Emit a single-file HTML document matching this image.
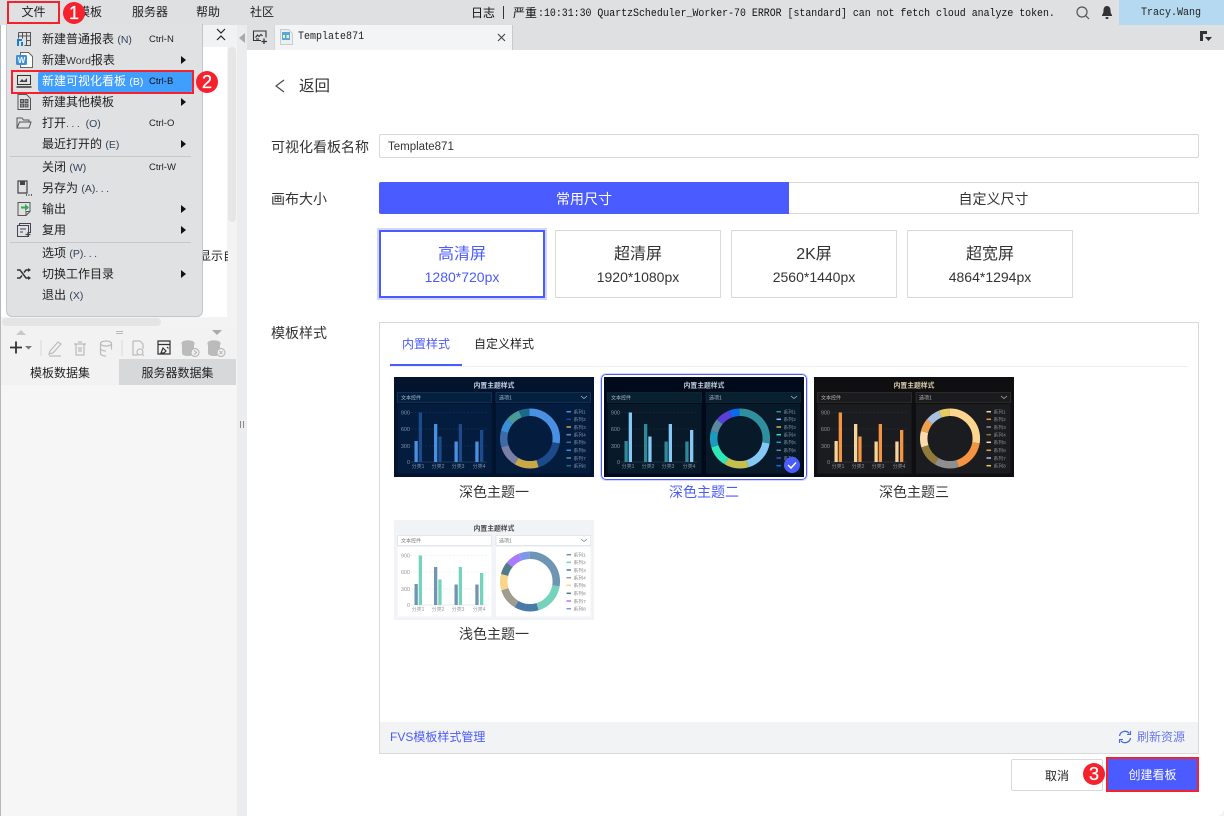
<!DOCTYPE html>
<html lang="zh"><head><meta charset="utf-8"><title>Template871</title>
<style>
*{box-sizing:border-box;margin:0;padding:0}
html,body{width:1224px;height:816px;overflow:hidden;background:#f1f2f4}
body{position:relative;font-family:"Liberation Sans","Noto Sans CJK SC",sans-serif;color:#333}
.a{position:absolute;white-space:nowrap}
.t{position:absolute;white-space:nowrap;line-height:16px;transform:translateY(-8px)}
.m{font-family:"Liberation Mono","Noto Sans CJK SC",monospace}
.mi{position:absolute;left:42px;font-size:12px;line-height:16px;white-space:nowrap;color:#222;transform:translateY(-8px)}
.mi small{font-family:"Liberation Sans",sans-serif;font-size:10.5px;color:#345}
.sc{position:absolute;left:149px;font-size:9.5px;line-height:12px;color:#222;transform:translateY(-5px)}
.ar{position:absolute;left:181px;width:0;height:0;border-left:5px solid #111;border-top:4px solid transparent;border-bottom:4px solid transparent;transform:translateY(-4px)}
.ic{position:absolute;left:16px;transform:translateY(-8px)}
.bd{position:absolute;width:22px;height:22px;border-radius:50%;background:#f5222d;color:#fff;font-size:18px;line-height:22px;text-align:center;-webkit-text-stroke:.3px #fff}
.card{position:absolute;top:230px;width:166px;height:68px;border:1px solid #d9d9d9;background:#fff;text-align:center;color:#333}
.card b{position:absolute;left:0;right:0;top:15px;font-weight:400;font-size:16px;line-height:18px}
.card i{position:absolute;left:0;right:0;top:38px;font-style:normal;font-size:14px;line-height:16px}
.card.on{border:2px solid #4a5bff;outline:2px solid #d3d7ff;color:#4a5bff}
.card.on b{top:14px}.card.on i{top:37px}
svg.th{position:absolute;width:200px;height:100px;display:block}
svg.th text{font-family:"Liberation Sans","Noto Sans CJK SC",sans-serif}
.ttl{font-size:6.8px;font-weight:700}
.ctl{font-size:5px}
.yl{font-size:5.5px;text-anchor:end}
.xl{font-size:5px;text-anchor:middle}
.lg{font-size:4.8px}
.cap{position:absolute;width:200px;text-align:center;font-size:14px;line-height:16px;color:#333}
</style></head><body>

<!-- top bar -->
<div class="a" style="left:0;top:0;width:1224px;height:25px;background:#dfe0e2"></div>
<div class="t" style="left:78px;top:12px;font-size:12px;color:#222">模板</div>
<div class="t" style="left:132px;top:12px;font-size:12px;color:#222">服务器</div>
<div class="t" style="left:196px;top:12px;font-size:12px;color:#222">帮助</div>
<div class="t" style="left:250px;top:12px;font-size:12px;color:#222">社区</div>
<div class="t" style="left:471px;top:13px;font-size:12px;color:#111">日志</div>
<div class="a" style="left:503px;top:6px;width:1px;height:13px;background:#333"></div>
<div class="t" style="left:513px;top:13px;font-size:12px;color:#111">严重</div>
<div class="t m" style="left:538px;top:14px;font-size:11px;color:#111;transform-origin:left center;transform:translateY(-8px) scaleX(.9)">:10:31:30 QuartzScheduler_Worker-70 ERROR [standard] can not fetch cloud analyze token.</div>
<svg class="a" style="left:1075px;top:5px" width="16" height="16" viewBox="0 0 16 16" fill="none" stroke="#555" stroke-width="1.2"><circle cx="7" cy="7" r="5"/><path d="M10.7 10.7L14 14"/></svg>
<svg class="a" style="left:1101px;top:5px" width="12" height="15" viewBox="0 0 12 15"><path d="M6 1c-2.400 0-3.500 2-3.500 4.500 0 2.500-.8 3.500-1.500 4.500v1h10v-1c-.7-1-1.500-2-1.500-4.500C9.500 3 8.400 1 6 1z" fill="#333"/><rect x="4.500" y="12" width="3" height="2" rx="1" fill="#333"/></svg>
<div class="a m" style="left:1119px;top:0;width:105px;height:25px;background:#b5d9f0;font-size:11px;line-height:27px;text-align:center;color:#222"><span style="display:inline-block;transform:scaleX(.91)">Tracy.Wang</span></div>

<!-- tab strip -->
<div class="a" style="left:237px;top:25px;width:987px;height:25px;background:#dfe0e2"></div>
<div class="a" style="left:237px;top:25px;width:10px;height:791px;background:#ebecee"></div>
<div class="a" style="left:239px;top:33px;width:0;height:0;border-right:6px solid #aaa;border-top:5px solid transparent;border-bottom:5px solid transparent"></div>
<svg class="a" style="left:252px;top:29px" width="16" height="16" viewBox="0 0 16 16" fill="none" stroke="#333" stroke-width="1.1"><path d="M9 11.500H1.500V2h12.500v6.500"/><path d="M3.500 8.500l2-2.500 1.500 1.500 2-2 1.500 1.500"/><path d="M4 10h3" /><path d="M12 9.500v5.500M9.500 12.500h5.500" stroke-width="1.3"/></svg>
<div class="a" style="left:274px;top:25px;width:239px;height:25px;background:#f3f4f6;border-right:1px solid #c9cacc;border-left:1px solid #d5d6d8"></div>
<svg class="a" style="left:280px;top:29px" width="13" height="16" viewBox="0 0 13 16"><path d="M.5.500h8l4 4v11H.5z" fill="#eee" stroke="#ccc"/><rect x="2" y="3" width="8" height="8" fill="#5aa7dc"/><rect x="3" y="6" width="6" height="3" fill="#dff0e4"/><rect x="5" y="6" width="1.500" height="3" fill="#58b368"/></svg>
<div class="t m" style="left:298px;top:37px;font-size:11px;color:#222;transform-origin:left center;transform:translateY(-8px) scaleX(.91)">Template871</div>
<svg class="a" style="left:497px;top:33px" width="9" height="9" viewBox="0 0 9 9" stroke="#444" stroke-width="1.100"><path d="M1 1l7 7M8 1L1 8"/></svg>
<svg class="a" style="left:1199px;top:30px" width="14" height="13" viewBox="0 0 14 13"><path d="M1 1h7v3H4v7H1z" fill="#333"/><path d="M6 7h7l-3.500 4z" fill="#333"/></svg>

<!-- left panel -->
<div class="a" style="left:0;top:25px;width:237px;height:791px;background:#f6f6f7;border-left:1px solid #b4b9be"></div>
<div class="a" style="left:1px;top:25px;width:236px;height:302px;background:#fff"></div>
<div class="a" style="left:203px;top:25px;width:34px;height:22px;background:#f1f2f3"></div>
<svg class="a" style="left:215px;top:28px" width="12" height="13" viewBox="0 0 12 13" fill="none" stroke="#222" stroke-width="1.200"><path d="M2 1l4 4 4-4M2 12l4-4 4 4"/></svg>
<div class="a" style="left:227px;top:47px;width:10px;height:271px;background:#f3f3f3"></div>
<div class="a" style="left:228px;top:47px;width:8px;height:175px;background:#e6e6e6;border-radius:4px"></div>
<div class="a" style="left:1px;top:317px;width:236px;height:10px;background:#f3f3f3"></div>
<div class="a" style="left:2px;top:318px;width:159px;height:8px;background:#e4e4e4;border-radius:4px"></div>
<div class="t" style="left:203px;top:256px;width:24.5px;overflow:hidden;font-size:12px;color:#222"><span style="margin-left:-4px">显示自</span></div>
<div class="a" style="left:1px;top:327px;width:236px;height:32px;background:#f2f2f3"></div>
<div class="a" style="left:16px;top:330px;border-left:5px solid transparent;border-right:5px solid transparent;border-bottom:5px solid #c8c8c8"></div>
<div class="a" style="left:212px;top:330px;border-left:5px solid transparent;border-right:5px solid transparent;border-top:5px solid #aaa"></div>
<div class="a" style="left:116px;top:331px;width:7px;height:3px;border-top:1px solid #bbb;border-bottom:1px solid #bbb"></div>
<svg class="a" style="left:8px;top:337px" width="228" height="22" viewBox="0 0 228 22" fill="none" stroke="#bbb" stroke-width="1.200">
<path d="M2 10.500h12M8 4.500v12" stroke="#333" stroke-width="1.800"/><path d="M17 9h7l-3.500 3.500z" fill="#777" stroke="none"/>
<path d="M33 3v16M114 3v16" stroke="#ddd"/>
<path d="M42 14l8-9 3 2-8 9-4 1zM41 19h12" stroke="#bbb"/>
<path d="M66 7h12M68 7v11h8V7M70 5h4M71 10v5M73 10v5"/>
<ellipse cx="98" cy="6.500" rx="5.500" ry="2.500"/><path d="M92.500 6.500v10c0 1.500 2.500 2.500 5.500 2.500M103.500 6.500v6M92.500 11.500c0 1.500 3 2.500 5.500 2.500"/>
<path d="M125 4h7l3 3v5M125 4v14h5"/><circle cx="132" cy="15" r="3"/><path d="M134 17l2 2"/>
<path d="M150 4h12v13h-12zM150 7.500h12" stroke="#333"/><path d="M155 11l3 3-2 2h-3zM159 10l1.500 1.500" stroke="#333"/>
<ellipse cx="180" cy="6.500" rx="6" ry="2.700" fill="#bbb"/><path d="M174 6.500v10c0 1.500 3 2.500 6 2.500s6-1 6-2.500V6.500z" fill="#bbb" stroke="none"/><circle cx="187" cy="15.500" r="4" fill="#f2f2f3"/><path d="M186 13.500l2.500 2-2.500 2"/>
<ellipse cx="206" cy="6.500" rx="6" ry="2.700" fill="#bbb"/><path d="M200 6.500v10c0 1.500 3 2.500 6 2.500s6-1 6-2.500V6.500z" fill="#bbb" stroke="none"/><circle cx="213" cy="15.500" r="4" fill="#f2f2f3"/><path d="M211.500 14l3 3M214.500 14l-3 3"/>
</svg>
<div class="a" style="left:1px;top:359px;width:118px;height:26px;background:#f2f2f3;font-size:12px;line-height:28px;text-align:center;color:#222">模板数据集</div>
<div class="a" style="left:119px;top:359px;width:117px;height:26px;background:#d7d8da;font-size:12px;line-height:28px;text-align:center;color:#222">服务器数据集</div>
<div class="a" style="left:240px;top:421px;width:4px;height:7px;border-left:1px solid #888;border-right:1px solid #888"></div>

<!-- file menu -->
<div class="a" style="left:6px;top:24px;width:197px;height:293px;background:#e0e1e3;border:1px solid #c4c5c7;border-top:0;border-radius:0 0 6px 6px"></div>
<div class="a" style="left:7px;top:1px;width:53px;height:23px;border:2px solid #f5222d;font-size:12px;line-height:19px;text-align:center;color:#222">文件</div>
<div class="a" style="left:38px;top:71px;width:155px;height:21px;background:#409eff;border-radius:3px"></div>
<div class="a" style="left:11px;top:70px;width:183px;height:24px;border:2px solid #f5222d"></div>
<div class="a" style="left:10px;top:156px;width:181px;height:1px;background:#c6c7c9"></div>
<div class="a" style="left:10px;top:242px;width:181px;height:1px;background:#c6c7c9"></div>

<svg class="ic" style="top:39px" width="16" height="16" viewBox="0 0 16 16" fill="none" stroke="#555"><path d="M2.500 1.500h12v13h-6M2.500 1.500v6M6.500 1.500v6M10.500 1.500v13M2.500 5h12M10.500 9.500h4"/><path d="M1 8h5v2H3v5H1zM5 11h2v4H5z" fill="#1e7fc8" stroke="none"/></svg>
<div class="mi" style="top:39px">新建普通报表 <small>(N)</small></div><div class="sc" style="top:39px">Ctrl-N</div>

<svg class="ic" style="top:60px" width="17" height="16" viewBox="0 0 17 16"><path d="M4.500.5h8l4 4v11h-12z" fill="#fff" stroke="#666"/><rect y="3" width="11" height="10" rx="1.500" fill="#3d8fd8"/><text x="5.500" y="11" font-size="8" font-weight="700" fill="#fff" text-anchor="middle" font-family="Liberation Sans">W</text></svg>
<div class="mi" style="top:60px">新建<small style="color:#333">Word</small>报表</div><div class="ar" style="top:60px"></div>

<svg class="ic" style="top:81px" width="16" height="16" viewBox="0 0 16 16" fill="none" stroke="#333"><path d="M1.500 2.500h13v9h-13z"/><path d="M3.500 9l2.500-3 2 2 3-3v4z" fill="#444" stroke="none"/><path d="M.5 14h15" stroke-width="1.500"/></svg>
<div class="mi" style="top:81px;color:#fff">新建可视化看板 <small style="color:#fff">(B)</small></div><div class="sc" style="top:81px;color:#111">Ctrl-B</div>

<svg class="ic" style="top:102px" width="16" height="16" viewBox="0 0 16 16" fill="none" stroke="#555"><path d="M2 .5h8.500l4 4v11H2z"/><path d="M4.500 5.500h3v3h-3zM9 5.500h3v3H9zM4.500 10h3v3h-3zM9 10h3v3H9z" fill="#999"/></svg>
<div class="mi" style="top:102px">新建其他模板</div><div class="ar" style="top:102px"></div>

<svg class="ic" style="top:123px" width="16" height="16" viewBox="0 0 16 16" fill="none" stroke="#555"><path d="M1 13V3h5l1.500 2H13v2M1 13l2.500-6H15l-2 6z"/></svg>
<div class="mi" style="top:123px">打开<small style="letter-spacing:2.500px">...</small> <small>(O)</small></div><div class="sc" style="top:123px">Ctrl-O</div>

<div class="mi" style="top:144px">最近打开的 <small>(E)</small></div><div class="ar" style="top:144px"></div>
<div class="mi" style="top:167px">关闭 <small>(W)</small></div><div class="sc" style="top:167px">Ctrl-W</div>

<svg class="ic" style="top:188px" width="16" height="16" viewBox="0 0 16 16"><path d="M2 1h9v12H2z" fill="none" stroke="#444" stroke-width="1.200"/><rect x="4" y="1" width="5" height="4" fill="#444"/><path d="M10 15h1M12.500 15h1M15 15h1" stroke="#333" stroke-width="1.500"/></svg>
<div class="mi" style="top:188px">另存为 <small>(A)</small><small style="letter-spacing:2.500px">...</small></div>

<svg class="ic" style="top:209px" width="16" height="16" viewBox="0 0 16 16" fill="none" stroke="#555"><path d="M2 1.500h12v9l-4 4H2z"/><path d="M10 14.500v-4h4"/><path d="M5 5.500h4V3l4 3.500L9 10V7.500H5z" fill="#34a853" stroke="none"/></svg>
<div class="mi" style="top:209px">输出</div><div class="ar" style="top:209px"></div>

<svg class="ic" style="top:230px" width="16" height="16" viewBox="0 0 16 16" fill="none" stroke="#445"><path d="M3.500 3.500V1.500h11v9h-2"/><path d="M1.500 3.500h11v11h-11z"/><path d="M4 7h6M4 10h3" /><path d="M12 10v5M9.500 12.500h5" stroke-width="1.200"/></svg>
<div class="mi" style="top:230px">复用</div><div class="ar" style="top:230px"></div>

<div class="mi" style="top:253px">选项 <small>(P)</small><small style="letter-spacing:2.500px">...</small></div>
<svg class="ic" style="top:274px" width="16" height="16" viewBox="0 0 16 16" fill="none" stroke="#333" stroke-width="1.500"><path d="M1 4h3l6 8h3M1 12h3l2-2.500M8 6.500L10 4h3"/><path d="M12 2l3 2-3 2zM12 10l3 2-3 2z" fill="#333" stroke="none"/></svg>
<div class="mi" style="top:274px">切换工作目录</div><div class="ar" style="top:274px"></div>
<div class="mi" style="top:295px">退出 <small>(X)</small></div>

<div class="bd" style="left:63px;top:2px">1</div>
<div class="bd" style="left:196px;top:71px">2</div>

<!-- main -->
<div class="a" style="left:247px;top:50px;width:977px;height:766px;background:#fff;border-radius:0 0 8px 0"></div>
<svg class="a" style="left:274px;top:79px" width="12" height="14" viewBox="0 0 12 14" fill="none" stroke="#444" stroke-width="1.100"><path d="M10 1L2 7l8 6"/></svg>
<div class="t" style="left:299px;top:87px;font-size:15.500px;color:#333">返回</div>

<div class="t" style="left:271px;top:147px;font-size:14px">可视化看板名称</div>
<div class="a" style="left:379px;top:134px;width:820px;height:24px;border:1px solid #d9d9d9;border-radius:2px;font-size:11.500px;line-height:24px;padding-left:8px;color:#333">Template871</div>

<div class="t" style="left:271px;top:199px;font-size:14px">画布大小</div>
<div class="a" style="left:379px;top:182px;width:410px;height:32px;background:#4a5bff;border-radius:2px 0 0 2px;color:#fff;font-size:14px;line-height:34px;text-align:center">常用尺寸</div>
<div class="a" style="left:789px;top:182px;width:410px;height:32px;border:1px solid #d9d9d9;border-left:0;font-size:14px;line-height:32px;text-align:center;color:#333">自定义尺寸</div>

<div class="card on" style="left:379px"><b>高清屏</b><i>1280*720px</i></div>
<div class="card" style="left:555px"><b>超清屏</b><i>1920*1080px</i></div>
<div class="card" style="left:731px"><b>2K屏</b><i>2560*1440px</i></div>
<div class="card" style="left:907px"><b>超宽屏</b><i>4864*1294px</i></div>

<div class="t" style="left:271px;top:333px;font-size:14px">模板样式</div>
<div class="a" style="left:379px;top:322px;width:820px;height:432px;border:1px solid #d9d9d9"></div>
<div class="t" style="left:402px;top:344px;font-size:12px;color:#4a5bff">内置样式</div>
<div class="t" style="left:474px;top:344px;font-size:12px;color:#222">自定义样式</div>
<div class="a" style="left:390px;top:366px;width:798px;height:1px;background:#eee"></div>
<div class="a" style="left:390px;top:364px;width:72px;height:2px;background:#4a5bff"></div>

<!-- theme 1 -->
<svg class="th" style="left:394px;top:377px" viewBox="0 0 200 100">
<rect width="200" height="100" fill="#02132e"/>
<text class="ttl" x="100" y="10.500" fill="#c5d3e3" text-anchor="middle">内置主题样式</text>
<rect x="3.500" y="15.500" width="94" height="10" fill="#04203f" stroke="#1d4168" stroke-width=".6"/><rect x="102" y="15.500" width="94.500" height="10" fill="#04203f" stroke="#1d4168" stroke-width=".6"/>
<text class="ctl" x="7" y="22.500" fill="#a9bacd">文本控件</text><text class="ctl" x="105" y="22.500" fill="#a9bacd">选项1</text><path d="M187 19l3 2.500 3-2.500" stroke="#a9bacd" stroke-width=".7" fill="none"/>
<rect x="3.500" y="27" width="94" height="69.500" fill="#041d3e"/><rect x="102" y="27" width="94.500" height="69.500" fill="#041d3e"/>
<path d="M17 35.500h76M17 52h76M17 69h76" stroke="#1d3d63" stroke-width=".6" stroke-dasharray="2 1.500"/><path d="M17 85h76" stroke="#31506f" stroke-width=".6"/>
<g fill="#7f93ab"><text class="yl" x="16" y="37.500">900</text><text class="yl" x="16" y="54">600</text><text class="yl" x="16" y="71">300</text><text class="yl" x="16" y="87">0</text></g>
<g fill="#4a90e2"><rect x="20.500" y="64" width="3.300" height="21"/><rect x="40" y="47" width="3.300" height="38"/><rect x="60.500" y="64.500" width="3.300" height="20.500"/><rect x="81.300" y="64.500" width="3.300" height="20.500"/></g>
<g fill="#1c4a8a"><rect x="24.700" y="35.500" width="3.300" height="49.500"/><rect x="44.300" y="59.500" width="3.300" height="25.500"/><rect x="64.700" y="47" width="3.300" height="38"/><rect x="86" y="53" width="3.300" height="32"/></g>
<g fill="#7f93ab"><text class="xl" x="24" y="91">分类1</text><text class="xl" x="44" y="91">分类2</text><text class="xl" x="64" y="91">分类3</text><text class="xl" x="85" y="91">分类4</text></g>
<g fill="none" stroke-width="7.500" transform="rotate(-90 136 61.500)"><circle cx="136" cy="61.500" r="26.300" stroke="#4a90e2" pathLength="360" stroke-dasharray="100 260"/><circle cx="136" cy="61.500" r="26.300" stroke="#1c4a8a" pathLength="360" stroke-dasharray="64 296" stroke-dashoffset="-100"/><circle cx="136" cy="61.500" r="26.300" stroke="#c9a848" pathLength="360" stroke-dasharray="48 312" stroke-dashoffset="-164"/><circle cx="136" cy="61.500" r="26.300" stroke="#7a7fa8" pathLength="360" stroke-dasharray="42 318" stroke-dashoffset="-212"/><circle cx="136" cy="61.500" r="26.300" stroke="#3d6ba8" pathLength="360" stroke-dasharray="32 328" stroke-dashoffset="-254"/><circle cx="136" cy="61.500" r="26.300" stroke="#3a8fd8" pathLength="360" stroke-dasharray="25 335" stroke-dashoffset="-286"/><circle cx="136" cy="61.500" r="26.300" stroke="#4a9a9a" pathLength="360" stroke-dasharray="29 331" stroke-dashoffset="-311"/><circle cx="136" cy="61.500" r="26.300" stroke="#1c6a8a" pathLength="360" stroke-dasharray="20 340" stroke-dashoffset="-340"/></g>
<g stroke-width="1.500"><path d="M172.500 34.700h4.500" stroke="#4a90e2"/><path d="M172.500 42.300h4.500" stroke="#1c4a8a"/><path d="M172.500 50h4.500" stroke="#c9a848"/><path d="M172.500 57.700h4.500" stroke="#7a7fa8"/><path d="M172.500 65.300h4.500" stroke="#3d6ba8"/><path d="M172.500 73.300h4.500" stroke="#3a8fd8"/><path d="M172.500 81h4.500" stroke="#4a9a9a"/><path d="M172.500 88.700h4.500" stroke="#1c6a8a"/></g>
<g fill="#7f93ab"><text class="lg" x="179.500" y="36.500">系列1</text><text class="lg" x="179.500" y="44">系列2</text><text class="lg" x="179.500" y="52">系列3</text><text class="lg" x="179.500" y="59.500">系列4</text><text class="lg" x="179.500" y="67">系列5</text><text class="lg" x="179.500" y="75">系列6</text><text class="lg" x="179.500" y="83">系列7</text><text class="lg" x="179.500" y="90.500">系列8</text></g>
</svg>
<div class="cap" style="left:394px;top:484px">深色主题一</div>

<!-- theme 2 -->
<div class="a" style="left:601px;top:374px;width:206px;height:106px;border:1.500px solid #4a5bff;outline:1.500px solid #d3d7ff;border-radius:5px;background:#fff"></div>
<svg class="th" style="left:604px;top:377px" viewBox="0 0 200 100">
<rect width="200" height="100" fill="#000a1a"/>
<text class="ttl" x="100" y="10.500" fill="#bfd0d8" text-anchor="middle">内置主题样式</text>
<rect x="3.500" y="15.500" width="94" height="10" fill="#08202f" stroke="#12323f" stroke-width=".6"/><rect x="102" y="15.500" width="94.500" height="10" fill="#08202f" stroke="#12323f" stroke-width=".6"/>
<text class="ctl" x="7" y="22.500" fill="#a9bacd">文本控件</text><text class="ctl" x="105" y="22.500" fill="#a9bacd">选项1</text><path d="M187 19l3 2.500 3-2.500" stroke="#a9bacd" stroke-width=".7" fill="none"/>
<rect x="3.500" y="27" width="94" height="69.500" fill="#08192a"/><rect x="102" y="27" width="94.500" height="69.500" fill="#08192a"/>
<path d="M17 35.500h76M17 52h76M17 69h76" stroke="#1f3444" stroke-width=".6" stroke-dasharray="2 1.500"/><path d="M17 85h76" stroke="#31505f" stroke-width=".6"/>
<g fill="#7f93a3"><text class="yl" x="16" y="37.500">900</text><text class="yl" x="16" y="54">600</text><text class="yl" x="16" y="71">300</text><text class="yl" x="16" y="87">0</text></g>
<g fill="#2d8a96"><rect x="20.500" y="64" width="3.300" height="21"/><rect x="40" y="47" width="3.300" height="38"/><rect x="60.500" y="64.500" width="3.300" height="20.500"/><rect x="81.300" y="64.500" width="3.300" height="20.500"/></g>
<g fill="#85c8f5"><rect x="24.700" y="35.500" width="3.300" height="49.500"/><rect x="44.300" y="59.500" width="3.300" height="25.500"/><rect x="64.700" y="47" width="3.300" height="38"/><rect x="86" y="53" width="3.300" height="32"/></g>
<g fill="#7f93a3"><text class="xl" x="24" y="91">分类1</text><text class="xl" x="44" y="91">分类2</text><text class="xl" x="64" y="91">分类3</text><text class="xl" x="85" y="91">分类4</text></g>
<g fill="none" stroke-width="7.500" transform="rotate(-90 136 61.500)"><circle cx="136" cy="61.500" r="26.300" stroke="#2f8f9f" pathLength="360" stroke-dasharray="100 260"/><circle cx="136" cy="61.500" r="26.300" stroke="#85c8f5" pathLength="360" stroke-dasharray="64 296" stroke-dashoffset="-100"/><circle cx="136" cy="61.500" r="26.300" stroke="#c4c050" pathLength="360" stroke-dasharray="48 312" stroke-dashoffset="-164"/><circle cx="136" cy="61.500" r="26.300" stroke="#2ee6b8" pathLength="360" stroke-dasharray="42 318" stroke-dashoffset="-212"/><circle cx="136" cy="61.500" r="26.300" stroke="#1a9cc0" pathLength="360" stroke-dasharray="32 328" stroke-dashoffset="-254"/><circle cx="136" cy="61.500" r="26.300" stroke="#5a8a9f" pathLength="360" stroke-dasharray="25 335" stroke-dashoffset="-286"/><circle cx="136" cy="61.500" r="26.300" stroke="#5a3fd8" pathLength="360" stroke-dasharray="29 331" stroke-dashoffset="-311"/><circle cx="136" cy="61.500" r="26.300" stroke="#0a6af0" pathLength="360" stroke-dasharray="20 340" stroke-dashoffset="-340"/></g>
<g stroke-width="1.500"><path d="M172.500 34.700h4.500" stroke="#2f8f9f"/><path d="M172.500 42.300h4.500" stroke="#85c8f5"/><path d="M172.500 50h4.500" stroke="#c4c050"/><path d="M172.500 57.700h4.500" stroke="#2ee6b8"/><path d="M172.500 65.300h4.500" stroke="#1a9cc0"/><path d="M172.500 73.300h4.500" stroke="#5a8a9f"/><path d="M172.500 81h4.500" stroke="#5a3fd8"/><path d="M172.500 88.700h4.500" stroke="#0a6af0"/></g>
<g fill="#7f93a3"><text class="lg" x="179.500" y="36.500">系列1</text><text class="lg" x="179.500" y="44">系列2</text><text class="lg" x="179.500" y="52">系列3</text><text class="lg" x="179.500" y="59.500">系列4</text><text class="lg" x="179.500" y="67">系列5</text><text class="lg" x="179.500" y="75">系列6</text><text class="lg" x="179.500" y="83">系列7</text><text class="lg" x="179.500" y="90.500">系列8</text></g>
<circle cx="188" cy="88" r="8" fill="#4a5bff"/><path d="M184 88l3 3 5-5.500" stroke="#fff" stroke-width="1.500" fill="none"/>
</svg>
<div class="cap" style="left:604px;top:484px;color:#4a5bff">深色主题二</div>

<!-- theme 3 -->
<svg class="th" style="left:814px;top:377px" viewBox="0 0 200 100">
<rect width="200" height="100" fill="#0f0f12"/>
<text class="ttl" x="100" y="10.500" fill="#dfcfae" text-anchor="middle">内置主题样式</text>
<rect x="3.500" y="15.500" width="94" height="10" fill="#1a1b1f" stroke="#3f3a2e" stroke-width=".6"/><rect x="102" y="15.500" width="94.500" height="10" fill="#1a1b1f" stroke="#3f3a2e" stroke-width=".6"/>
<text class="ctl" x="7" y="22.500" fill="#b5b5b5">文本控件</text><text class="ctl" x="105" y="22.500" fill="#b5b5b5">选项1</text><path d="M187 19l3 2.500 3-2.500" stroke="#b5b5b5" stroke-width=".7" fill="none"/>
<rect x="3.500" y="27" width="94" height="69.500" fill="#1b1c20"/><rect x="102" y="27" width="94.500" height="69.500" fill="#1b1c20"/>
<path d="M17 35.500h76M17 52h76M17 69h76" stroke="#333438" stroke-width=".6" stroke-dasharray="2 1.500"/><path d="M17 85h76" stroke="#45464a" stroke-width=".6"/>
<g fill="#8f8f8f"><text class="yl" x="16" y="37.500">900</text><text class="yl" x="16" y="54">600</text><text class="yl" x="16" y="71">300</text><text class="yl" x="16" y="87">0</text></g>
<g fill="#f8d49a"><rect x="20.500" y="64" width="3.300" height="21"/><rect x="40" y="47" width="3.300" height="38"/><rect x="60.500" y="64.500" width="3.300" height="20.500"/><rect x="81.300" y="64.500" width="3.300" height="20.500"/></g>
<g fill="#f59440"><rect x="24.700" y="35.500" width="3.300" height="49.500"/><rect x="44.300" y="59.500" width="3.300" height="25.500"/><rect x="64.700" y="47" width="3.300" height="38"/><rect x="86" y="53" width="3.300" height="32"/></g>
<g fill="#8f8f8f"><text class="xl" x="24" y="91">分类1</text><text class="xl" x="44" y="91">分类2</text><text class="xl" x="64" y="91">分类3</text><text class="xl" x="85" y="91">分类4</text></g>
<g fill="none" stroke-width="7.500" transform="rotate(-90 136 61.500)"><circle cx="136" cy="61.500" r="26.300" stroke="#fdd58f" pathLength="360" stroke-dasharray="100 260"/><circle cx="136" cy="61.500" r="26.300" stroke="#f59440" pathLength="360" stroke-dasharray="64 296" stroke-dashoffset="-100"/><circle cx="136" cy="61.500" r="26.300" stroke="#8f8f8f" pathLength="360" stroke-dasharray="48 312" stroke-dashoffset="-164"/><circle cx="136" cy="61.500" r="26.300" stroke="#8f7a3a" pathLength="360" stroke-dasharray="42 318" stroke-dashoffset="-212"/><circle cx="136" cy="61.500" r="26.300" stroke="#fcd9ac" pathLength="360" stroke-dasharray="32 328" stroke-dashoffset="-254"/><circle cx="136" cy="61.500" r="26.300" stroke="#eda050" pathLength="360" stroke-dasharray="25 335" stroke-dashoffset="-286"/><circle cx="136" cy="61.500" r="26.300" stroke="#a9c0e0" pathLength="360" stroke-dasharray="29 331" stroke-dashoffset="-311"/><circle cx="136" cy="61.500" r="26.300" stroke="#e6cc60" pathLength="360" stroke-dasharray="20 340" stroke-dashoffset="-340"/></g>
<g stroke-width="1.500"><path d="M172.500 34.700h4.500" stroke="#fdd58f"/><path d="M172.500 42.300h4.500" stroke="#f59440"/><path d="M172.500 50h4.500" stroke="#8f8f8f"/><path d="M172.500 57.700h4.500" stroke="#8f7a3a"/><path d="M172.500 65.300h4.500" stroke="#fcd9ac"/><path d="M172.500 73.300h4.500" stroke="#eda050"/><path d="M172.500 81h4.500" stroke="#a9c0e0"/><path d="M172.500 88.700h4.500" stroke="#e6cc60"/></g>
<g fill="#8f8f8f"><text class="lg" x="179.500" y="36.500">系列1</text><text class="lg" x="179.500" y="44">系列2</text><text class="lg" x="179.500" y="52">系列3</text><text class="lg" x="179.500" y="59.500">系列4</text><text class="lg" x="179.500" y="67">系列5</text><text class="lg" x="179.500" y="75">系列6</text><text class="lg" x="179.500" y="83">系列7</text><text class="lg" x="179.500" y="90.500">系列8</text></g>
</svg>
<div class="cap" style="left:814px;top:484px">深色主题三</div>

<!-- light theme -->
<svg class="th" style="left:394px;top:520px" viewBox="0 0 200 100">
<rect width="200" height="100" fill="#f1f3f6"/>
<text class="ttl" x="100" y="10.500" fill="#444" text-anchor="middle">内置主题样式</text>
<rect x="3.500" y="15.500" width="94" height="10" fill="#fff" stroke="#d5dde8" stroke-width=".6"/><rect x="102" y="15.500" width="94.500" height="10" fill="#fff" stroke="#d5dde8" stroke-width=".6"/>
<text class="ctl" x="7" y="22.500" fill="#777">文本控件</text><text class="ctl" x="105" y="22.500" fill="#777">选项1</text><path d="M187 19l3 2.500 3-2.500" stroke="#777" stroke-width=".7" fill="none"/>
<rect x="3.500" y="27" width="94" height="69.500" fill="#fff"/><rect x="102" y="27" width="94.500" height="69.500" fill="#fff"/>
<path d="M17 35.500h76M17 52h76M17 69h76" stroke="#e3e6ea" stroke-width=".6" stroke-dasharray="2 1.500"/><path d="M17 85h76" stroke="#d5d8dc" stroke-width=".6"/>
<g fill="#999"><text class="yl" x="16" y="37.500">900</text><text class="yl" x="16" y="54">600</text><text class="yl" x="16" y="71">300</text><text class="yl" x="16" y="87">0</text></g>
<g fill="#6e96b4"><rect x="20.500" y="64" width="3.300" height="21"/><rect x="40" y="47" width="3.300" height="38"/><rect x="60.500" y="64.500" width="3.300" height="20.500"/><rect x="81.300" y="64.500" width="3.300" height="20.500"/></g>
<g fill="#76d3bb"><rect x="24.700" y="35.500" width="3.300" height="49.500"/><rect x="44.300" y="59.500" width="3.300" height="25.500"/><rect x="64.700" y="47" width="3.300" height="38"/><rect x="86" y="53" width="3.300" height="32"/></g>
<g fill="#999"><text class="xl" x="24" y="91">分类1</text><text class="xl" x="44" y="91">分类2</text><text class="xl" x="64" y="91">分类3</text><text class="xl" x="85" y="91">分类4</text></g>
<g fill="none" stroke-width="7.500" transform="rotate(-90 136 61.500)"><circle cx="136" cy="61.500" r="26.300" stroke="#6e96b4" pathLength="360" stroke-dasharray="100 260"/><circle cx="136" cy="61.500" r="26.300" stroke="#76d3bb" pathLength="360" stroke-dasharray="64 296" stroke-dashoffset="-100"/><circle cx="136" cy="61.500" r="26.300" stroke="#4a7aa8" pathLength="360" stroke-dasharray="48 312" stroke-dashoffset="-164"/><circle cx="136" cy="61.500" r="26.300" stroke="#a09c90" pathLength="360" stroke-dasharray="42 318" stroke-dashoffset="-212"/><circle cx="136" cy="61.500" r="26.300" stroke="#f8d587" pathLength="360" stroke-dasharray="32 328" stroke-dashoffset="-254"/><circle cx="136" cy="61.500" r="26.300" stroke="#527a8a" pathLength="360" stroke-dasharray="25 335" stroke-dashoffset="-286"/><circle cx="136" cy="61.500" r="26.300" stroke="#a97aff" pathLength="360" stroke-dasharray="29 331" stroke-dashoffset="-311"/><circle cx="136" cy="61.500" r="26.300" stroke="#7a9ae8" pathLength="360" stroke-dasharray="20 340" stroke-dashoffset="-340"/></g>
<g stroke-width="1.500"><path d="M172.500 34.700h4.500" stroke="#6e96b4"/><path d="M172.500 42.300h4.500" stroke="#76d3bb"/><path d="M172.500 50h4.500" stroke="#4a7aa8"/><path d="M172.500 57.700h4.500" stroke="#a09c90"/><path d="M172.500 65.300h4.500" stroke="#f8d587"/><path d="M172.500 73.300h4.500" stroke="#527a8a"/><path d="M172.500 81h4.500" stroke="#a97aff"/><path d="M172.500 88.700h4.500" stroke="#7a9ae8"/></g>
<g fill="#888"><text class="lg" x="179.500" y="36.500">系列1</text><text class="lg" x="179.500" y="44">系列2</text><text class="lg" x="179.500" y="52">系列3</text><text class="lg" x="179.500" y="59.500">系列4</text><text class="lg" x="179.500" y="67">系列5</text><text class="lg" x="179.500" y="75">系列6</text><text class="lg" x="179.500" y="83">系列7</text><text class="lg" x="179.500" y="90.500">系列8</text></g>
</svg>
<div class="cap" style="left:394px;top:626px">浅色主题一</div>

<!-- footer of template box -->
<div class="a" style="left:380px;top:722px;width:818px;height:31px;background:#f2f3f4"></div>
<div class="t" style="left:390px;top:737px;font-size:12px;color:#4a5bff">FVS模板样式管理</div>
<svg class="a" style="left:1118px;top:730px" width="14" height="14" viewBox="0 0 14 14" fill="none" stroke="#4a6cd8" stroke-width="1.300"><path d="M1.500 6a5.500 5.500 0 0 1 9.800-2.500M12.500 8a5.500 5.500 0 0 1-9.800 2.500"/><path d="M12.500 1v3.500H9M1.500 13V9.500H5" stroke-width="1.100"/></svg>
<div class="t" style="left:1137px;top:737px;font-size:12px;color:#6a78f0">刷新资源</div>

<div class="a" style="left:1011px;top:759px;width:92px;height:32px;border:1px solid #d9d9d9;border-radius:2px;background:#fff;font-size:12px;line-height:32px;text-align:center;color:#222">取消</div>
<div class="a" style="left:1106px;top:757px;width:93px;height:35px;background:#4a5bff;border:2px solid #f5222d;color:#fff;font-size:12px;line-height:33px;text-align:center">创建看板</div>
<div class="bd" style="left:1083px;top:763px">3</div>
</body></html>
